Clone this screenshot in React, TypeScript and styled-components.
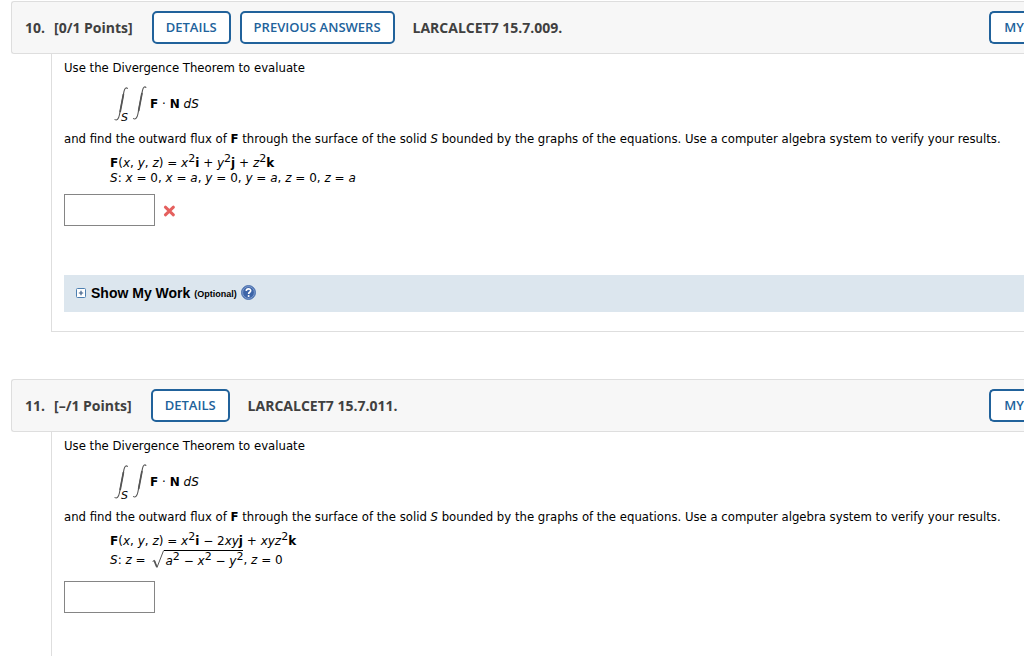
import React from "react";
import styled, { createGlobalStyle } from "styled-components";

const GlobalStyle = createGlobalStyle`
  *, *::before, *::after { box-sizing: border-box; }
  body {
    margin: 0;
    background: #fff;
    color: #000;
    font-family: "DejaVu Sans", Verdana, sans-serif;
    font-size: 12px;
    line-height: 16px;
  }
`;

const Page = styled.main`
  display: flex;
  flex-direction: column;
  gap: 47px;
  min-height: 100vh;
  padding: 1px 0 0 11px;
`;

const Question = styled.section<{ $grow?: boolean }>`
  display: flex;
  flex-direction: column;
  flex: ${(p) => (p.$grow ? "1 0 auto" : "0 0 auto")};
`;

const Header = styled.header`
  display: flex;
  align-items: center;
  height: 53px;
  padding-left: 13px;
  background: #f7f7f7;
  border: 1px solid #dedede;
  border-right: 0;
  border-radius: 3px 0 0 3px;
  color: #404040;
  font-family: "Open Sans", sans-serif;
  white-space: nowrap;
`;

const Title = styled.h2`
  display: flex;
  gap: 9px;
  margin: 0 19px 0 0;
  font-size: 14px;
  font-weight: 700;
  line-height: 20px;
`;

const Actions = styled.div`
  display: flex;
  gap: 9px;
`;

const HeaderButton = styled.button<{ $edge?: boolean }>`
  height: 33px;
  padding: ${(p) => (p.$edge ? "0 0 1px 13px" : "0 12px 1px")};
  background: #fff;
  border: 2px solid #21629b;
  border-right-width: ${(p) => (p.$edge ? "0" : "2px")};
  border-radius: ${(p) => (p.$edge ? "5px 0 0 5px" : "5px")};
  margin-left: ${(p) => (p.$edge ? "auto" : "0")};
  color: #21629b;
  font-family: inherit;
  font-size: 13px;
  font-weight: 600;
  line-height: 18px;
  cursor: pointer;
`;

const Source = styled.strong`
  margin-left: 18px;
  font-size: 14px;
  line-height: 20px;
`;

const Card = styled.div<{ $open?: boolean }>`
  flex: 1 0 auto;
  margin-left: 40px;
  padding: 6px 0 19px 12px;
  border-left: 1px solid #dedede;
  border-bottom: ${(p) => (p.$open ? "0" : "1px solid #dedede")};
`;

const Text = styled.p`
  margin: 0;
  font-family: "DejaVu Sans Condensed", "DejaVu Sans", sans-serif;
  font-size: 13px;
`;

const Integral = styled.div`
  display: flex;
  align-items: center;
  height: 40px;
  margin: 8px 0 7px 50px;
`;

const Equations = styled.div`
  margin: 8px 0 9px 46px;
`;

const Equation = styled.div<{ $tall?: boolean }>`
  display: flex;
  align-items: center;
  height: ${(p) => (p.$tall ? "24px" : "15px")};
  white-space: pre;
`;

const Power = styled.sup`
  font-size: 11px;
  line-height: 0;
  vertical-align: 5px;
`;

const Root = styled.span`
  display: inline-flex;
  align-items: flex-end;
  height: 20px;
  margin-left: 2px;
`;

const Radicand = styled.span`
  height: 20px;
  padding: 2px 0 0 2px;
  border-top: 1px solid #000;
`;

const AnswerRow = styled.div`
  display: flex;
  align-items: center;
  gap: 8px;
`;

const Answer = styled.input`
  width: 91px;
  height: 32px;
  padding: 4px 6px;
  border: 1px solid #858585;
  background: #fff;
  font: inherit;
`;

const WorkBar = styled.div`
  display: flex;
  align-items: center;
  gap: 4px;
  height: 37px;
  margin-top: 49px;
  padding: 0 0 2px 12px;
  background: #dce6ee;
  font-family: "Liberation Sans", Arial, sans-serif;
  font-weight: 700;
`;

const WorkToggle = styled.button`
  display: flex;
  align-items: center;
  gap: 5px;
  padding: 0;
  border: 0;
  background: none;
  color: #000;
  font: inherit;
  font-size: 14px;
  cursor: pointer;
`;

const Optional = styled.span`
  padding-top: 2px;
  font-size: 9px;
`;

const HelpButton = styled.button`
  display: flex;
  padding: 0;
  border: 0;
  background: none;
  cursor: pointer;
`;

const Sq = () => <Power>2</Power>;

function DoubleIntegral() {
  return (
    <svg width="36" height="40" viewBox="0 0 36 40" aria-label="double integral over S" role="img">
      <defs>
        <g id="integral-sign" fill="none" strokeLinecap="round">
          <path
            d="M13.4 4.4 C12.4 3.2 10.8 3.8 10 7.4 L5.4 31 C4.6 35.4 2.6 36.6 1 35.6"
            stroke="#555"
            strokeWidth="1.1"
          />
          <path d="M9.4 10.5 L6.2 27.5" stroke="#555" strokeWidth="1.7" />
        </g>
      </defs>
      <use href="#integral-sign" />
      <use href="#integral-sign" x="18.5" y="-1" />
      <text x="7" y="37" fontFamily="DejaVu Sans" fontStyle="italic" fontSize="11">
        S
      </text>
    </svg>
  );
}

function Prompt() {
  return (
    <>
      <Text>Use the Divergence Theorem to evaluate</Text>
      <Integral>
        <DoubleIntegral />
        <span>
          <b>F</b> · <b>N</b> <i>dS</i>
        </span>
      </Integral>
      <Text>
        and find the outward flux of <b>F</b> through the surface of the solid <i>S</i> bounded by
        the graphs of the equations. Use a computer algebra system to verify your results.
      </Text>
    </>
  );
}

function WrongMark() {
  return (
    <svg width="13" height="13" viewBox="0 0 13 13" role="img" aria-label="Incorrect">
      <path d="M2.4 3.2 L10.4 10.8 M10.4 3.2 L2.4 10.8" stroke="#e5605e" strokeWidth="3" strokeLinecap="round" />
    </svg>
  );
}

function PlusBox() {
  return (
    <svg width="10" height="10" viewBox="0 0 10 10" aria-hidden="true">
      <rect x="0.5" y="0.5" width="9" height="9" rx="1" fill="#fff" stroke="#4d7fb0" />
      <path d="M5 2.8 V7.2 M2.8 5 H7.2" stroke="#3d5f88" strokeWidth="1.2" />
    </svg>
  );
}

function HelpIcon() {
  return (
    <svg width="15" height="15" viewBox="0 0 15 15" aria-hidden="true">
      <circle cx="7.5" cy="7.5" r="7" fill="#3c64a8" stroke="#5378b4" />
      <circle cx="7.5" cy="7.5" r="5.9" fill="none" stroke="#8fabd6" strokeWidth="0.8" />
      <path
        d="M5.3 5.9 C5.3 3.2 9.7 3.2 9.7 5.8 C9.7 7.3 7.6 7.2 7.6 8.9"
        fill="none"
        stroke="#fff"
        strokeWidth="1.6"
      />
      <circle cx="7.6" cy="11" r="1" fill="#fff" />
    </svg>
  );
}

export default function App() {
  return (
    <>
      <GlobalStyle />
      <Page>
        <Question>
          <Header>
            <Title>
              <span>10.</span>
              <span>[0/1 Points]</span>
            </Title>
            <Actions>
              <HeaderButton>DETAILS</HeaderButton>
              <HeaderButton>PREVIOUS ANSWERS</HeaderButton>
            </Actions>
            <Source>LARCALCET7 15.7.009.</Source>
            <HeaderButton $edge>MY</HeaderButton>
          </Header>
          <Card>
            <Prompt />
            <Equations>
              <Equation>
                <span>
                  <b>F</b>(<i>x</i>, <i>y</i>, <i>z</i>) = <i>x</i><Sq /><b>i</b> + <i>y</i><Sq />
                  <b>j</b> + <i>z</i><Sq /><b>k</b>
                </span>
              </Equation>
              <Equation>
                <span>
                  <i>S</i>: <i>x</i> = 0, <i>x</i> = <i>a</i>, <i>y</i> = 0, <i>y</i> = <i>a</i>, <i>z</i> = 0, <i>z</i> = <i>a</i>
                </span>
              </Equation>
            </Equations>
            <AnswerRow>
              <Answer aria-label="Answer to question 10" />
              <WrongMark />
            </AnswerRow>
            <WorkBar>
              <WorkToggle aria-expanded="false">
                <PlusBox />
                Show My Work
              </WorkToggle>
              <Optional>(Optional)</Optional>
              <HelpButton aria-label="Help">
                <HelpIcon />
              </HelpButton>
            </WorkBar>
          </Card>
        </Question>

        <Question $grow>
          <Header>
            <Title>
              <span>11.</span>
              <span>[–/1 Points]</span>
            </Title>
            <Actions>
              <HeaderButton>DETAILS</HeaderButton>
            </Actions>
            <Source>LARCALCET7 15.7.011.</Source>
            <HeaderButton $edge>MY</HeaderButton>
          </Header>
          <Card $open>
            <Prompt />
            <Equations>
              <Equation>
                <span>
                  <b>F</b>(<i>x</i>, <i>y</i>, <i>z</i>) = <i>x</i><Sq /><b>i</b> − 2<i>xy</i>
                  <b>j</b> + <i>xyz</i><Sq /><b>k</b>
                </span>
              </Equation>
              <Equation $tall>
                <span>
                  <i>S</i>: <i>z</i> ={" "}
                </span>
                <Root>
                  <svg width="12" height="20" viewBox="0 0 12 20" role="img" aria-label="square root of">
                    <path d="M0.6 11.4 L2.4 10.4 L5 17.4 L11.6 0.5" fill="none" stroke="#555" strokeWidth="1" />
                    <path d="M2.2 10.6 L4.8 17" stroke="#555" strokeWidth="1.6" />
                  </svg>
                  <Radicand>
                    <i>a</i><Sq /> − <i>x</i><Sq /> − <i>y</i><Sq />
                  </Radicand>
                </Root>
                <span>
                  , <i>z</i> = 0
                </span>
              </Equation>
            </Equations>
            <AnswerRow>
              <Answer aria-label="Answer to question 11" />
            </AnswerRow>
          </Card>
        </Question>
      </Page>
    </>
  );
}
